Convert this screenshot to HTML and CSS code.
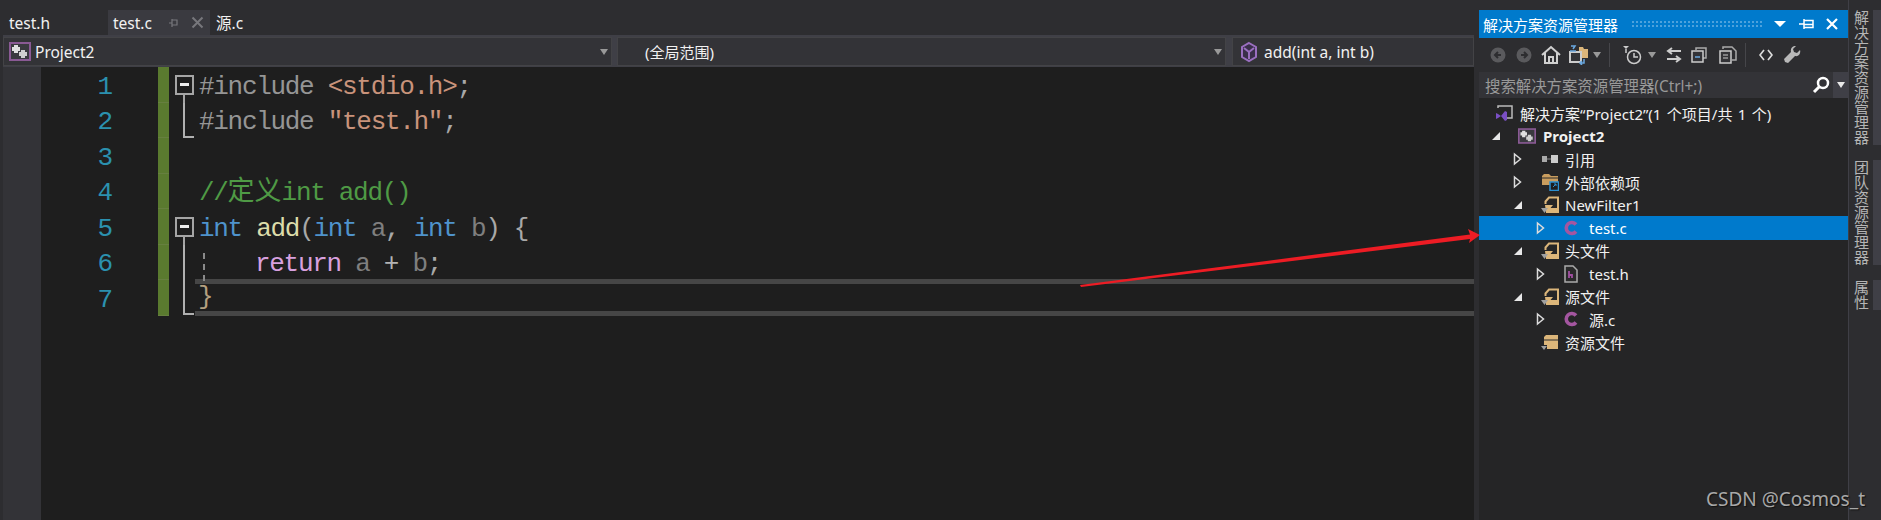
FILE: index.html
```html
<!DOCTYPE html>
<html lang="zh">
<head>
<meta charset="utf-8">
<title>Project2</title>
<link rel="stylesheet" href="styles.css">
</head>
<body>
<svg class="defs" width="0" height="0">
  <symbol id="proj" viewBox="0 0 22 19">
    <rect x="1" y="1" width="20" height="17" fill="#3a3a3f" stroke="#8a5a94" stroke-width="2"/>
    <path d="M5 3h4v2h2v4H9v2H5V9H3V5h2z" fill="#e0e0e0"/>
    <path d="M12 8h4v2h2v4h-2v2h-4v-2h-2v-4h2z" fill="#cfcfcf"/>
  </symbol>
  <symbol id="filter" viewBox="0 0 18 18">
    <path d="M4.500 8V5.500L8 1.500h9V16H5" fill="none" stroke="#dcb67a" stroke-width="2"/>
    <path d="M4 9h8l-2.500 3H16v4H5z" fill="#dcb67a"/>
    <path d="M0 12h7l-3.500 5z" fill="#a0a0a0"/>
  </symbol>
  <symbol id="cfile" viewBox="0 0 18 18">
    <path d="M14 5.500A5.500 5.500 0 1 0 14 12.500" fill="none" stroke="#a456a0" stroke-width="3.600"/>
  </symbol>
  <symbol id="expand" viewBox="0 0 12 14">
    <path d="M2.500 2v10l6-5z" fill="none" stroke="#dcdcdc" stroke-width="1.500"/>
  </symbol>
  <symbol id="collapse" viewBox="0 0 12 14">
    <path d="M10 3v8H2z" fill="#e8e8e8"/>
  </symbol>
</svg>

<div class="app">
  <main class="doc">
    <div class="tabs">
      <span class="tab">test.h</span>
      <span class="tab active">test.c
        <svg class="pin" width="12" height="12" viewBox="0 0 12 12"><path d="M1 6h3M4 2v8M4 3h5v5H4M9 6h0" fill="none" stroke="#77777c" stroke-width="1.200"/></svg>
        <svg class="close" width="13" height="13" viewBox="0 0 13 13"><path d="M1.500 1.500l10 10M11.500 1.500l-10 10" stroke="#77777c" stroke-width="2"/></svg>
      </span>
      <span class="tab last">源.c</span>
    </div>
    <div class="nav">
      <div class="combo c1">
        <svg class="proj-nav" width="22" height="19"><use href="#proj"/></svg>
        <span class="combo-text">Project2</span>
        <i class="caret"></i>
      </div>
      <div class="combo c2">
        <span class="combo-text scope">(全局范围)</span>
        <i class="caret"></i>
      </div>
      <div class="combo c3">
        <svg class="fn" width="18" height="22" viewBox="0 0 18 22"><path d="M9 2l7 4v10l-7 4-7-4V6z" fill="#3a2f4a" stroke="#9a6fc0" stroke-width="2"/><path d="M4 7l5 4 5-4M9 11v7" fill="none" stroke="#9a6fc0" stroke-width="2"/></svg>
        <span class="combo-text">add(int a, int b)</span>
      </div>
    </div>
    <div class="editor">
      <div class="line">
        <span class="num">1</span><span class="change"></span>
        <span class="fold"><i class="box"></i></span>
        <code class="code"><span class="pre">#include </span><span class="str">&lt;stdio.h&gt;</span><span class="pun">;</span></code>
      </div>
      <div class="line">
        <span class="num">2</span><span class="change"></span>
        <span class="fold"><i class="end"></i></span>
        <code class="code"><span class="pre">#include </span><span class="str">"test.h"</span><span class="pun">;</span></code>
      </div>
      <div class="line">
        <span class="num">3</span><span class="change"></span>
        <span class="fold"></span>
        <code class="code"></code>
      </div>
      <div class="line">
        <span class="num">4</span><span class="change"></span>
        <span class="fold"></span>
        <code class="code cmt">//<span class="cjk">定义</span>int add()</code>
      </div>
      <div class="line">
        <span class="num">5</span><span class="change"></span>
        <span class="fold"><i class="box"></i></span>
        <code class="code"><span class="kw">int</span> <span class="fnn">add</span><span class="pun">(</span><span class="kw">int</span> <span class="par">a</span><span class="pun">,</span> <span class="kw">int</span> <span class="par">b</span><span class="pun">)</span> <span class="pun">{</span></code>
      </div>
      <div class="line">
        <span class="num">6</span><span class="change"></span>
        <span class="fold"><i class="mid"></i></span>
        <code class="code indented"><span class="ret">return</span> <span class="par">a</span> <span class="op">+</span> <span class="par">b</span><span class="pun">;</span></code>
      </div>
      <div class="line">
        <span class="num">7</span><span class="change"></span>
        <span class="fold"><i class="end long"></i></span>
        <code class="code current"><span class="brace">}</span></code>
      </div>
    </div>
  </main>

  <aside class="explorer">
    <header class="title">
      <span class="title-text">解决方案资源管理器</span>
      <span class="grip"></span>
      <svg width="14" height="8" viewBox="0 0 14 8"><path d="M1 1h12L7 7z" fill="#fff"/></svg>
      <svg class="t-pin" width="15" height="10" viewBox="0 0 15 10"><path d="M0 5h5M5 0v10M5 1.500h9v7H5M5 5.500h9" fill="none" stroke="#fff" stroke-width="1.500"/></svg>
      <svg width="12" height="12" viewBox="0 0 12 12"><path d="M1 1l10 10M11 1L1 11" stroke="#fff" stroke-width="2.200"/></svg>
    </header>
    <div class="tools">
      <svg width="16" height="16" viewBox="0 0 16 16"><circle cx="8" cy="8" r="7.500" fill="#5a5a5d"/><path d="M11 8H5M8 5L5 8l3 3" fill="none" stroke="#2d2d30" stroke-width="2"/></svg>
      <svg class="g10" width="16" height="16" viewBox="0 0 16 16"><circle cx="8" cy="8" r="7.500" fill="#5a5a5d"/><path d="M5 8h6M8 5l3 3-3 3" fill="none" stroke="#2d2d30" stroke-width="2"/></svg>
      <svg class="g9" width="20" height="20" viewBox="0 0 20 20"><path d="M1 10l9-8 9 8M4 8v10h12V8M8 18v-6h4v6" fill="none" stroke="#d0d0d0" stroke-width="2"/></svg>
      <svg class="g8" width="20" height="20" viewBox="0 0 20 20"><path d="M10 2h4l1 2h4v9h-9z" fill="#dcb67a"/><rect x="1" y="7" width="11" height="10" fill="#333337" stroke="#ccc" stroke-width="2"/><path d="M1 6h6M2 1h4l-2 3M15 14v4h-4M13 16l-2 2 2 2" fill="none" stroke="#6aa8e0" stroke-width="1.500"/></svg>
      <i class="caret mini"></i>
      <i class="sep"></i>
      <svg class="g10" width="22" height="20" viewBox="0 0 22 20"><path d="M1 1h6L4 4z" fill="#ccc"/><path d="M4 4v4" stroke="#ccc" stroke-width="1.500"/><circle cx="12" cy="12" r="6.500" fill="none" stroke="#ccc" stroke-width="1.500"/><path d="M12 8v4h4" fill="none" stroke="#ccc" stroke-width="1.500"/></svg>
      <i class="caret mini"></i>
      <svg class="g10" width="16" height="16" viewBox="0 0 16 16"><path d="M6 1L2 4l4 3M2 4h13M10 9l4 3-4 3M14 12H1" fill="none" stroke="#ccc" stroke-width="2"/></svg>
      <svg class="g9" width="16" height="16" viewBox="0 0 16 16"><path d="M5 3V1h10v10h-3" fill="none" stroke="#aaa" stroke-width="1.500"/><rect x="1" y="4" width="11" height="11" fill="#333337" stroke="#ccc" stroke-width="1.500"/><path d="M4 10h5" stroke="#6aa8e0" stroke-width="1.500"/></svg>
      <svg class="g12" width="18" height="18" viewBox="0 0 18 18"><path d="M4 3V1h9l4 4v9h-4" fill="none" stroke="#aaa" stroke-width="1.500"/><path d="M1 5h11v12H1z" fill="#333337" stroke="#ccc" stroke-width="1.500"/><path d="M4 9h5M4 12h5" stroke="#ccc"/></svg>
      <i class="sep"></i>
      <svg class="g11" width="14" height="12" viewBox="0 0 14 12"><path d="M5 1L1 6l4 5M9 1l4 5-4 5" fill="none" stroke="#ddd" stroke-width="1.700"/></svg>
      <svg class="g10" width="18" height="18" viewBox="0 0 18 18"><path d="M17 4l-3 3-3-1-1-3 3-3c-3-.5-6 2-5 6L1 13l1 3 3 1 7-7c4 1 6-3 5-6z" fill="#b8b8b8"/></svg>
    </div>
    <div class="search">
      <span class="search-text">搜索解决方案资源管理器(Ctrl+;)</span>
      <svg width="18" height="18" viewBox="0 0 18 18"><circle cx="11" cy="7" r="5" fill="none" stroke="#fff" stroke-width="2.500"/><path d="M7.500 10.500L2 16" stroke="#fff" stroke-width="3"/></svg>
      <span class="search-drop"><i class="caret mini light"></i></span>
    </div>
    <ul class="tree">
      <li class="row solution">
        <svg class="icon" width="18" height="18" viewBox="0 0 18 18"><path d="M3 4V2h14v12H9" fill="none" stroke="#bbb" stroke-width="1.500"/><path d="M1 9l2 1 3 2 4-5 2 1v8l-2 1-4-5-3 2-2 1z" fill="#7a4fc4"/></svg>
        <span>解决方案“Project2”(1 个项目/共 1 个)</span>
      </li>
      <li class="row l1 bold">
        <svg class="exp" width="12" height="14"><use href="#collapse"/></svg>
        <svg class="icon" width="18" height="16"><use href="#proj"/></svg>
        <span>Project2</span>
      </li>
      <li class="row l2">
        <svg class="exp" width="12" height="14"><use href="#expand"/></svg>
        <svg class="icon" width="18" height="18" viewBox="0 0 18 18"><rect x="1" y="6" width="5" height="6" fill="#aaa"/><path d="M6 9h4" stroke="#888"/><rect x="10" y="5" width="7" height="8" fill="#ccc"/></svg>
        <span>引用</span>
      </li>
      <li class="row l2">
        <svg class="exp" width="12" height="14"><use href="#expand"/></svg>
        <svg class="icon" width="18" height="18" viewBox="0 0 18 18"><path d="M1 3l2-2h5l2 2h7v9H1z" fill="#c99d5e"/><path d="M1 5h16" stroke="#2a2a2a"/><rect x="9" y="9" width="8.500" height="8.500" fill="#1e1e1e" stroke="#2b8fd0" stroke-width="1.500"/><path d="M12 14l3-3M13 11h2v2" fill="none" stroke="#2b8fd0"/></svg>
        <span>外部依赖项</span>
      </li>
      <li class="row l2">
        <svg class="exp" width="12" height="14"><use href="#collapse"/></svg>
        <svg class="icon" width="18" height="18"><use href="#filter"/></svg>
        <span>NewFilter1</span>
      </li>
      <li class="row l3 selected">
        <svg class="exp" width="12" height="14"><use href="#expand"/></svg>
        <svg class="icon" width="18" height="18"><use href="#cfile"/></svg>
        <span>test.c</span>
      </li>
      <li class="row l2">
        <svg class="exp" width="12" height="14"><use href="#collapse"/></svg>
        <svg class="icon" width="18" height="18"><use href="#filter"/></svg>
        <span>头文件</span>
      </li>
      <li class="row l3">
        <svg class="exp" width="12" height="14"><use href="#expand"/></svg>
        <svg class="icon" width="18" height="18" viewBox="0 0 18 18"><path d="M3 1h8l4 4v12H3z" fill="#2a2a2a" stroke="#aaa" stroke-width="1.500"/><path d="M7 6v7M7 10h3v3" fill="none" stroke="#a04fa0" stroke-width="1.800"/></svg>
        <span>test.h</span>
      </li>
      <li class="row l2">
        <svg class="exp" width="12" height="14"><use href="#collapse"/></svg>
        <svg class="icon" width="18" height="18"><use href="#filter"/></svg>
        <span>源文件</span>
      </li>
      <li class="row l3">
        <svg class="exp" width="12" height="14"><use href="#expand"/></svg>
        <svg class="icon" width="18" height="18"><use href="#cfile"/></svg>
        <span>源.c</span>
      </li>
      <li class="row l2 noexp">
        <svg class="icon" width="18" height="18" viewBox="0 0 18 18"><path d="M3 4l2-2h12v14H6v-4H3z" fill="#dcb67a"/><path d="M3 7h14" stroke="#2a2a2a"/><path d="M0 13h6l-3 4z" fill="#a0a0a0"/></svg>
        <span>资源文件</span>
      </li>
    </ul>
  </aside>

  <nav class="side">
    <div class="side-tab t1"><span>解决方案资源管理器</span><i></i></div>
    <div class="side-tab t2"><span>团队资源管理器</span><i></i></div>
    <div class="side-tab t3"><span>属性</span><i></i></div>
  </nav>
</div>

<svg class="arrow" width="420" height="70" viewBox="0 0 420 70">
  <path d="M0 60L390 9.500 388 4 400 10 389 18 390 14 1 62z" fill="#ed1c24"/>
</svg>
<div class="mark">CSDN @Cosmos_t</div>
</body>
</html>
```
FILE: styles.css
```css
* { box-sizing: border-box; }
html, body { margin: 0; height: 100%; overflow: hidden; background: #2d2d30; }
body { position: relative; font-family: "Noto Sans", "Noto Sans CJK SC", sans-serif; color: #f1f1f1; }
.defs { position: absolute; }
i { display: block; }

.app { display: flex; height: 520px; }
.doc { width: 1479px; display: flex; flex-direction: column; padding-left: 3px; padding-right: 5px; }

.tabs { height: 35px; margin-top: 10px; display: flex; font-size: 15.500px; margin-left: -3px; }
.tab { display: flex; align-items: center; height: 25px; padding-left: 9px; width: 108px; }
.tab.active { background: #3a3a40; width: 102px; padding-left: 5px; }
.tab.last { width: auto; padding-left: 6px; }
.pin { margin-left: 16px; }
.close { margin-left: 11px; }

.nav { height: 32px; background: #3f3f46; margin-top: -10px; padding: 2px 0 1px; display: flex; gap: 5px; }
.combo { height: 29px; background: #333337; border: 1px solid #434346; display: flex; align-items: center; font-size: 15.500px; position: relative; }
.c1 { width: 609px; padding-left: 5px; }
.c2 { width: 609px; padding-left: 27px; }
.c3 { flex: 1; padding-left: 3px; margin-left: 1px; }
.combo-text { color: #f1f1f1; }
.proj-nav { margin-right: 4px; flex: none; }
.scope { font-size: 15px; }
.fn { margin: 0 6px 0 4px; }
.caret { position: absolute; right: 3px; top: 11px; border: 4px solid transparent; border-top: 6px solid #999; border-bottom: 0; }
.caret.mini { position: static; }
.caret.light { border-top-color: #e8e8e8; }

.editor { flex: 1; background: linear-gradient(to right, #333337 38px, #1e1e1e 38px); font-family: "Liberation Mono", "Noto Sans CJK SC", monospace; }
.line { height: 35.500px; display: flex; font-size: 26px; line-height: 35.500px; }
.num { width: 109px; padding-top: 2.500px; text-align: right; color: #2b91af; letter-spacing: -1px; }
.change { width: 11px; margin-left: 46px; background: #5a7a2f; border-bottom: 1px solid #667f3f; flex: none; }
.fold { width: 26px; flex: none; position: relative; }
.box { position: absolute; left: 6px; top: 8px; width: 19px; height: 20px; border: 2px solid #a5a5a5; }
.box::before { content: ""; position: absolute; left: 3px; right: 3px; top: 6px; height: 3px; background: #eee; }
.box::after { content: ""; position: absolute; left: 6px; top: 18px; width: 2px; height: 10px; background: #a5a5a5; }
.end { position: absolute; left: 14px; top: 0; width: 11px; height: 35px; border-left: 2px solid #b0b0b0; border-bottom: 2px solid #b0b0b0; }
.mid { position: absolute; left: 14px; top: 0; width: 2px; height: 100%; background: #b0b0b0; }
.code { flex: 1; display: block; font-family: inherit; white-space: pre; letter-spacing: -1.300px; color: #dcdcdc; padding: 2.500px 0 0 4px; }
.pre { color: #959595; }
.str { color: #c9937b; }
.pun { color: #a8a8a8; }
.kw { color: #4f93cc; }
.fnn { color: #dcdcaa; }
.par { color: #7f7f7f; }
.ret { color: #d8a0df; }
.op { color: #b4b4b4; }
.cmt { color: #4f9a45; }
.cjk { font-family: "Noto Sans CJK SC", sans-serif; font-size: 27px; letter-spacing: 0; line-height: 0; }
.indented { padding-left: 60px; position: relative; }
.indented::before { content: ""; position: absolute; left: 8px; top: 8px; height: 28px; border-left: 2px dashed #8a8a8a; }
.current { border: solid #464646; border-width: 5px 0; padding: 0 0 0 3px; margin-top: -1px; height: 36.500px; line-height: 26.500px; }
.brace { color: #b4a080; }

.explorer { width: 369px; margin-top: 10px; background: #252526; display: flex; flex-direction: column; height: 510px; }
.title { height: 28px; background: #007acc; display: flex; align-items: center; gap: 9px; padding: 0 10px 0 4px; color: #fff; }
.title-text { font-size: 15px; }
.grip { flex: 1; height: 8px; margin: 0 1px 0 4px; background-image: radial-gradient(#4da2dd 1px, transparent 1px); background-size: 4px 4px; }
.t-pin { margin: 0 3px; }
.tools { height: 34px; background: #2d2d30; display: flex; align-items: center; padding-left: 11px; }
.tools > * { flex: none; }
.g8 { margin-left: 8px; }
.g9 { margin-left: 9px; }
.g10 { margin-left: 10px; }
.g11 { margin-left: 11px; }
.g12 { margin-left: 12px; }
.tools .caret.mini { margin-left: 4px; }
.sep { width: 1px; height: 24px; background: #46464a; margin-left: 8px; margin-right: 2px; }
.search { height: 26px; background: #333337; display: flex; align-items: center; font-size: 15.400px; padding-left: 6px; }
.search-text { flex: 1; color: #999; }
.search-drop { width: 15px; height: 100%; background: #3f3f46; margin-left: 3px; display: flex; align-items: center; justify-content: center; }
.tree { list-style: none; margin: 4px 0 0; padding: 0; font-size: 15px; }
.row { height: 22.900px; display: flex; align-items: center; white-space: nowrap; color: #f1f1f1; }
.exp, .icon { flex: none; }
.solution { padding-left: 16px; word-spacing: 1.500px; }
.solution .icon { margin-right: 7px; }
.l1 { padding-left: 11px; }
.l1 .exp { margin-right: 16px; }
.l1 .icon { margin-right: 7px; }
.l2 { padding-left: 33px; }
.l2 .exp { margin-right: 17px; }
.l2 .icon { margin-right: 6px; }
.noexp { padding-left: 62px; }
.l3 { padding-left: 56px; }
.l3 .exp { margin-right: 15px; }
.l3 .icon { margin-right: 9px; }
.bold { font-weight: 700; }
.selected { background: #007acc; color: #fff; height: 24px; margin: -0.550px 0; }

.side { width: 33px; padding-top: 10px; display: flex; flex-direction: column; gap: 15px; border-left: 1px solid #3f3f46; }
.side-tab { display: flex; justify-content: space-between; }
.side-tab span { writing-mode: vertical-rl; font-size: 15px; line-height: 18px; color: #b5b5b5; margin-left: 3px; }
.side-tab i { width: 8px; background: #3f3f46; }

.arrow { position: absolute; left: 1080px; top: 225px; }
.mark { position: absolute; right: 16px; top: 486px; font-size: 19px; color: #a8a8a8; text-shadow: 1px 1px 1px #111; }
```
